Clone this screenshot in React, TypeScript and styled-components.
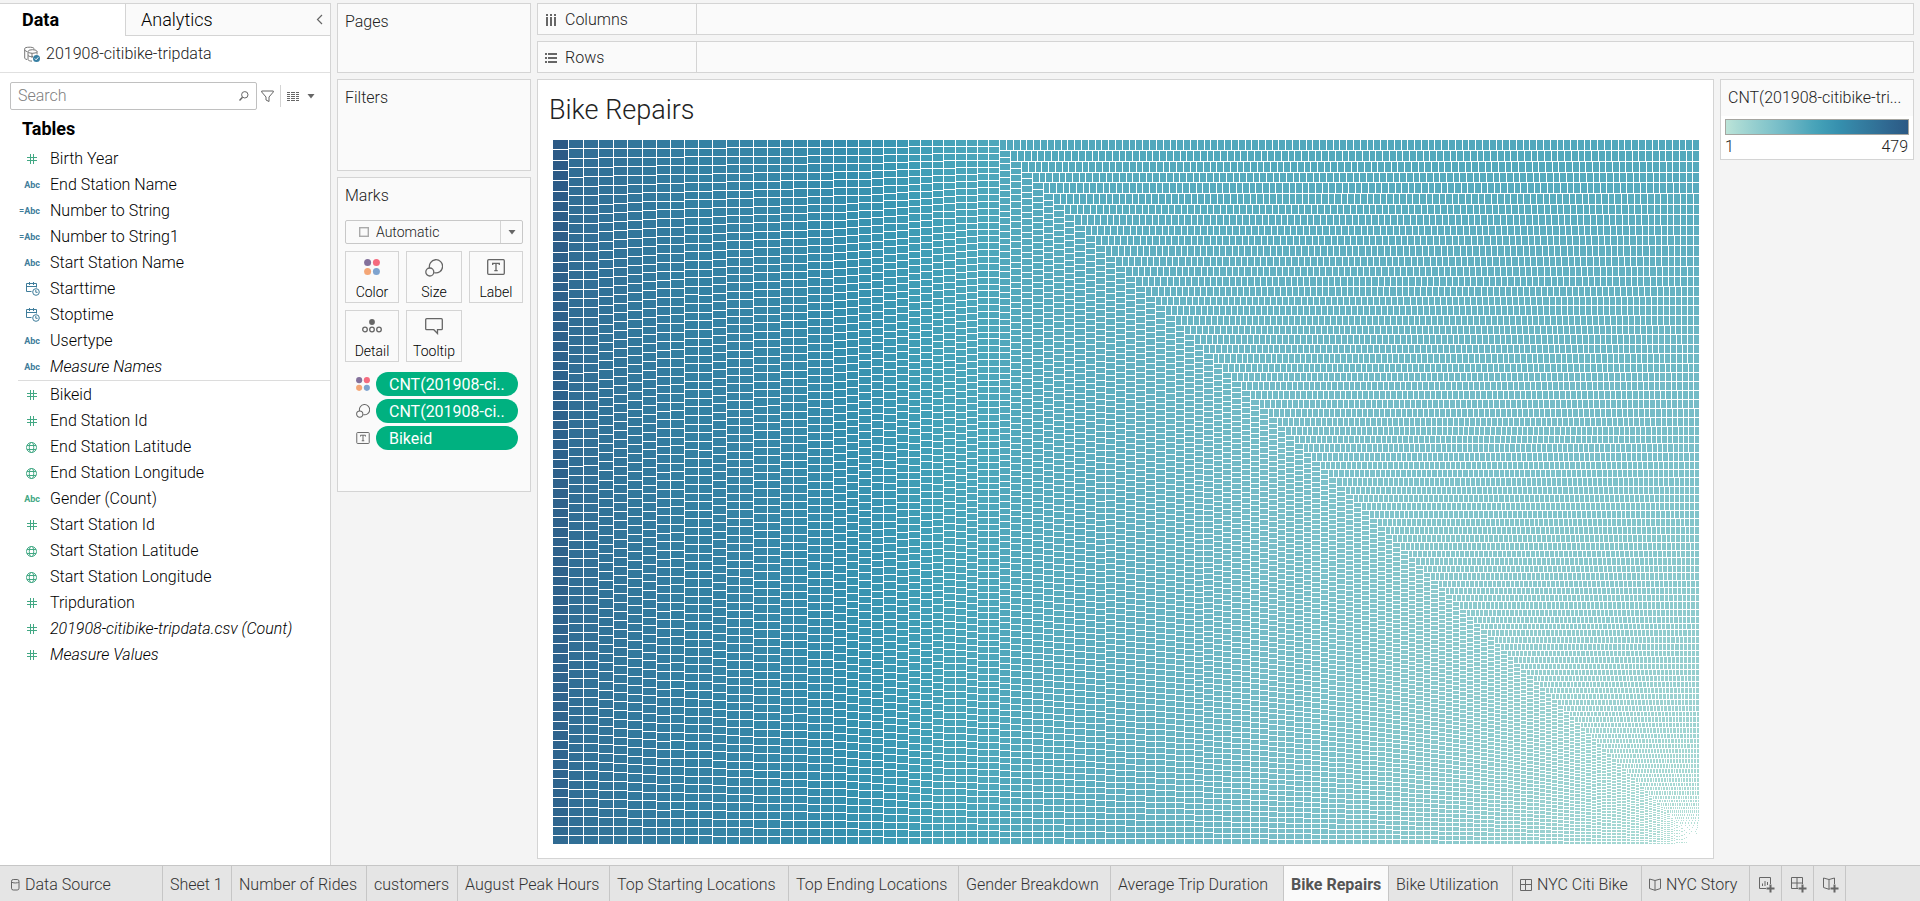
import React, { useLayoutEffect, useMemo, useRef, useState } from "react";
import styled, { createGlobalStyle } from "styled-components";

const color = {
  page: "#f4f4f4",
  card: "#fafafa",
  line: "#d4d4d4",
  text: "#222222",
  icon: "#666666",
  blue: "#3f7d9b",
  green: "#42a884",
  pill: "#00b180",
};

/* ---------- treemap model ---------- */

const PALETTE = [
  "#bce4d8", "#aedcd5", "#a1d5d2", "#95cecf", "#89c8cc", "#7ec1ca", "#72bac6", "#66b2c2", "#59acbe", "#4ba5ba",
  "#419eb6", "#3b96b2", "#358ead", "#3586a7", "#347ea1", "#32779b", "#316f96", "#2f6790", "#2d608a", "#2c5985",
];
const MAX_RIDES = 479;
const TOTAL_RIDES = 2344000;

/* Rides per bike, keyed by the square root of the share of rides still to come. */
const CURVE: [number, number][] = [
  [0, 1], [0.023, 10], [0.041, 22], [0.057, 31], [0.078, 38], [0.205, 75], [0.574, 165], [0.781, 217],
  [0.806, 229], [0.864, 300], [0.943, 350], [0.985, 402], [0.993, 412], [0.9935, 440], [0.9985, 455], [1, 479],
];

function ridesAt(s: number): number {
  for (let i = 1; i < CURVE.length; i++) {
    const [s1, v1] = CURVE[i];
    if (s <= s1) {
      const [s0, v0] = CURVE[i - 1];
      return v0 + ((v1 - v0) * (s - s0)) / (s1 - s0);
    }
  }
  return MAX_RIDES;
}

function buildRides(): number[] {
  const rides: number[] = [];
  let left = TOTAL_RIDES;
  while (left > 0) {
    const v = Math.min(left, Math.max(1, Math.round(ridesAt(Math.sqrt(left / TOTAL_RIDES)))));
    rides.push(v);
    left -= v;
  }
  return rides;
}

const RIDES = buildRides();

function mix(t: number): string {
  const p = Math.min(0.9999, Math.max(0, t)) * (PALETTE.length - 1);
  const i = Math.floor(p);
  const parse = (hex: string) => [1, 3, 5].map((k) => parseInt(hex.slice(k, k + 2), 16));
  const a = parse(PALETTE[i]);
  const b = parse(PALETTE[i + 1]);
  return `rgb(${a.map((c, k) => Math.round(c + (b[k] - c) * (p - i))).join(",")})`;
}

/* Squarified layout aiming at golden-ratio tiles; tiles of one shade share a path. */
function layout(width: number, height: number): [string, string][] {
  const target = (1 + Math.sqrt(5)) / 2;
  const bins = new Map<number, string[]>();
  let x0 = 0;
  let y0 = 0;
  let left = TOTAL_RIDES;
  let i = 0;
  const put = (v: number, ax: number, ay: number, bx: number, by: number) => {
    const x = Math.round(ax);
    const y = Math.round(ay);
    const w = Math.round(bx) - x - 1;
    const h = Math.round(by) - y - 1;
    if (w < 1 || h < 1) return;
    const key = Math.round((v / MAX_RIDES) * 120);
    const list = bins.get(key) ?? [];
    list.push(`M${x} ${y}h${w}v${h}h${-w}z`);
    bins.set(key, list);
  };
  while (i < RIDES.length && left > 0) {
    const dx = width - x0;
    const dy = height - y0;
    if (dx < 1 || dy < 1) break;
    let sum = RIDES[i];
    let min = sum;
    let max = sum;
    const alpha = Math.max(dy / dx, dx / dy) / (left * target);
    let worst = Math.max(max / (sum * sum * alpha), (sum * sum * alpha) / min);
    let j = i + 1;
    for (; j < RIDES.length; j++) {
      const v = RIDES[j];
      const next = sum + v;
      min = Math.min(min, v);
      max = Math.max(max, v);
      const beta = next * next * alpha;
      const ratio = Math.max(max / beta, beta / min);
      if (ratio > worst) break;
      sum = next;
      worst = ratio;
    }
    if (dx < dy) {
      const t = (dy * sum) / left;
      let x = x0;
      for (; i < j; i++) {
        const w = (dx * RIDES[i]) / sum;
        put(RIDES[i], x, y0, x + w, y0 + t);
        x += w;
      }
      y0 += t;
    } else {
      const t = (dx * sum) / left;
      let y = y0;
      for (; i < j; i++) {
        const h = (dy * RIDES[i]) / sum;
        put(RIDES[i], x0, y, x0 + t, y + h);
        y += h;
      }
      x0 += t;
    }
    left -= sum;
  }
  return [...bins].map(([key, d]) => [mix(key / 120), d.join("")]);
}

/* ---------- shared parts ---------- */

const GlobalStyle = createGlobalStyle`
  * { box-sizing: border-box; }
  body {
    margin: 0;
    background: ${color.page};
    color: ${color.text};
    font: 300 16px/20px Roboto, "Liberation Sans", sans-serif;
  }
  button, input, select { font: inherit; color: inherit; }
  button { cursor: pointer; }
  ul { list-style: none; margin: 0; padding: 0; }
  h1, h2 { margin: 0; font-weight: 300; }
  svg { display: block; flex: none; }
`;

const Page = styled.div`
  display: flex;
  flex-direction: column;
  min-height: 100vh;
`;

const Workspace = styled.div`
  display: flex;
  flex: 1;
  gap: 6px;
  padding: 3px 6px 6px 0;
`;

/* ---------- data pane ---------- */

const DataPane = styled.aside`
  flex: 0 0 331px;
  margin-bottom: -6px;
  background: #fff;
  border-top: 1px solid ${color.line};
  border-right: 1px solid ${color.line};
`;

const PaneTabs = styled.div`
  display: flex;
  height: 32px;
`;

const PaneTab = styled.button<{ $active?: boolean }>`
  flex: ${(p) => (p.$active ? "0 0 125px" : "1")};
  display: flex;
  align-items: center;
  justify-content: space-between;
  padding: 0 6px 0 ${(p) => (p.$active ? 22 : 15)}px;
  border: 0 solid ${color.line};
  border-width: ${(p) => (p.$active ? "0" : "0 0 1px 1px")};
  background: ${(p) => (p.$active ? "#fff" : color.card)};
  color: #000;
  font-size: 18px;
  font-weight: ${(p) => (p.$active ? 700 : 300)};
`;

const Source = styled.div`
  display: flex;
  align-items: center;
  gap: 6px;
  height: 37px;
  padding-left: 24px;
  border-bottom: 1px solid #e0e0e0;
`;

const SearchRow = styled.div`
  display: flex;
  align-items: center;
  margin: 9px 0 0 10px;
`;

const SearchBox = styled.label`
  display: flex;
  align-items: center;
  width: 247px;
  height: 28px;
  padding: 0 7px;
  border: 1px solid #c0c0c0;
  border-radius: 2px;
`;

const SearchInput = styled.input`
  flex: 1;
  min-width: 0;
  padding: 0;
  border: 0;
  outline: 0;
  background: none;
  &::placeholder { color: #808080; }
`;

const IconButton = styled.button<{ $gap: number }>`
  display: flex;
  align-items: center;
  padding: 0 0 0 ${(p) => p.$gap}px;
  border: 0;
  background: none;
`;

const Rule = styled.span`
  width: 1px;
  height: 22px;
  margin-left: 6px;
  background: ${color.line};
`;

const TablesTitle = styled.h2`
  padding: 9px 0 7px 22px;
  color: #000;
  font-size: 18px;
  font-weight: 700;
`;

const Fields = styled.ul`
  & + & {
    margin-left: 18px;
    padding-top: 1px;
    border-top: 1px solid #dcdcdc;
  }
  & + & li { padding-left: 2px; }
`;

const Field = styled.li<{ $italic?: boolean }>`
  display: flex;
  align-items: center;
  gap: 10px;
  height: 26px;
  padding-left: 20px;
  color: #000;
  font-style: ${(p) => (p.$italic ? "italic" : "normal")};
`;

const FieldIcon = styled.span<{ $measure?: boolean }>`
  display: flex;
  justify-content: flex-end;
  width: 20px;
  color: ${(p) => (p.$measure ? color.green : color.blue)};
  font: 700 9px/12px Roboto, sans-serif;
`;

/* ---------- cards ---------- */

const Cards = styled.div`
  display: flex;
  flex: 0 0 194px;
  flex-direction: column;
  gap: 6px;
`;

const Card = styled.section<{ $height: number }>`
  min-height: ${(p) => p.$height}px;
  padding: 8px 7px;
  border: 1px solid ${color.line};
  background: ${color.card};
`;

const CardTitle = styled.h2`
  font-size: 16px;
`;

const MarkType = styled.label`
  display: grid;
  grid-template-columns: 154px 1fr;
  align-items: center;
  height: 24px;
  margin-top: 14px;
  border: 1px solid #c8c8c8;
  border-radius: 2px;
  > * { grid-row: 1; }
  > svg:first-child { grid-column: 1; margin-left: 13px; }
`;

const MarkSelect = styled.select`
  grid-column: 1 / -1;
  height: 22px;
  padding: 0 0 0 30px;
  border: 0;
  outline: 0;
  background: none;
  appearance: none;
  font-size: 14px;
`;

const MarkArrow = styled.span`
  grid-column: 2;
  display: flex;
  align-items: center;
  justify-content: center;
  height: 22px;
  border-left: 1px solid ${color.line};
  pointer-events: none;
`;

const MarkButtons = styled.div`
  display: grid;
  grid-template-columns: 54px 56px 54px;
  gap: 7px;
  margin-top: 7px;
`;

const MarkButton = styled.button`
  display: flex;
  flex-direction: column;
  align-items: center;
  justify-content: space-between;
  height: 52px;
  padding: 7px 0 0;
  border: 1px solid ${color.line};
  background: ${color.card};
  color: #000;
  font-size: 14px;
`;

const Pills = styled.ul`
  display: flex;
  flex-direction: column;
  gap: 3px;
  margin-top: 10px;
  padding: 0 5px 0 10px;
`;

const PillRow = styled.li`
  display: flex;
  align-items: center;
  gap: 5px;
`;

const PillIcon = styled.span`
  display: flex;
  justify-content: center;
  width: 16px;
`;

const Pill = styled.button`
  flex: 1;
  height: 24px;
  padding: 1px 13px 0;
  border: 0;
  border-radius: 12px;
  background: ${color.pill};
  color: #fff;
  font-weight: 400;
  text-align: left;
  white-space: nowrap;
`;

/* ---------- shelves and view ---------- */

const Main = styled.main`
  display: flex;
  flex: 1;
  flex-direction: column;
  gap: 6px;
  min-width: 0;
`;

const Shelf = styled.div`
  display: flex;
  height: 32px;
  border: 1px solid ${color.line};
  background: ${color.card};
`;

const ShelfLabel = styled.div`
  display: flex;
  align-items: center;
  gap: 8px;
  width: 159px;
  padding: 1px 0 0 7px;
  border-right: 1px solid ${color.line};
`;

const ViewRow = styled.div`
  display: flex;
  flex: 1;
  align-items: flex-start;
  gap: 6px;
`;

const View = styled.section`
  display: flex;
  flex: 1;
  flex-direction: column;
  align-self: stretch;
  min-width: 0;
  padding: 0 13px 13px 15px;
  border: 1px solid ${color.line};
  background: #fff;
`;

const ViewTitle = styled.h1`
  height: 60px;
  margin-left: -4px;
  font-size: 27px;
  line-height: 60px;
`;

const ChartArea = styled.div`
  flex: 1;
  min-height: 300px;
  overflow: hidden;
`;

const Legend = styled.section`
  flex: 0 0 194px;
  border: 1px solid ${color.line};
  background: #fff;
`;

const LegendTitle = styled.h2`
  padding: 8px 7px;
  background: ${color.card};
  font-size: 16px;
  white-space: nowrap;
`;

const Ramp = styled.div`
  height: 16px;
  margin: 3px 4px 2px;
  border: 1px solid #a5a5a0;
  background: linear-gradient(to right, ${PALETTE.join(",")});
`;

const RampLabels = styled.div`
  display: flex;
  justify-content: space-between;
  padding: 0 5px 2px 4px;
`;

/* ---------- sheet tabs ---------- */

const SheetBar = styled.nav`
  display: flex;
  height: 36px;
  border-top: 1px solid #c6c6c6;
  background: #e5e5e5;
`;

const SheetTab = styled.button<{ $width: number; $active?: boolean; $inset?: number }>`
  display: flex;
  flex: 0 0 ${(p) => p.$width}px;
  align-items: center;
  gap: 5px;
  padding: 2px 0 0 ${(p) => p.$inset ?? 7}px;
  border: 0;
  border-right: 1px solid #c6c6c6;
  background: ${(p) => (p.$active ? color.card : "none")};
  color: ${(p) => (p.$active ? "#555" : "#333")};
  font-size: 16px;
  font-weight: ${(p) => (p.$active ? 700 : 300)};
  white-space: nowrap;
`;

/* ---------- icons ---------- */

const Hash = () => (
  <svg width="10" height="10" viewBox="0 0 10 10" stroke="currentColor" shapeRendering="crispEdges">
    <path d="M3.5 0v10M6.5 0v10M0 3.5h10M0 6.5h10" />
  </svg>
);
const Globe = () => (
  <svg width="11" height="11" viewBox="0 0 11 11" fill="none" stroke="currentColor">
    <circle cx="5.5" cy="5.5" r="5" />
    <ellipse cx="5.5" cy="5.5" rx="2.2" ry="5" />
    <path d="M1 3.5h9M1 7.5h9" />
  </svg>
);
const DateTime = () => (
  <svg width="14" height="14" viewBox="0 0 14 14" fill="none" stroke="currentColor">
    <path d="M5.5 9.5h-5v-8h10v4M.5 4.5h10M3.5 0v3M7.5 0v3" />
    <circle cx="10" cy="10" r="3.3" />
    <path d="M9.8 8v2.3h1.8" />
  </svg>
);
const Chevron = () => (
  <svg width="8" height="12" viewBox="0 0 8 12" fill="none" stroke={color.icon}>
    <path d="M6 1L1.500 5.500 6 10" strokeWidth="1.2" />
  </svg>
);
const SourceIcon = () => (
  <svg width="16" height="16" viewBox="0 0 16 16" fill="none" stroke="#777">
    <path d="M3 13.500C1 13 .7 12.500 .7 12V2.500C.7 1 9 .5 10 2.500V3.500M.7 4C1 5 2 5.300 3 5.500" />
    <ellipse cx="8.500" cy="5.500" rx="4.500" ry="1.800" />
    <path d="M4 5.500v8c0 1 2 1.600 4 1.600M13 5.500v3M4 9.500c1 1 3 1.300 5 1M8 7v5" />
    <circle cx="12.500" cy="12.500" r="3.500" fill="#377fa3" stroke="none" />
    <path d="M10.800 12.500l1.300 1.300 2.200-2.500" stroke="#fff" />
  </svg>
);
const SearchIcon = () => (
  <svg width="10" height="10" viewBox="0 0 10 10" fill="none" stroke={color.icon}>
    <circle cx="5.800" cy="3.800" r="3.200" />
    <path d="M3.500 6.200L.5 9.500" strokeWidth="1.400" />
  </svg>
);
const Funnel = () => (
  <svg width="13" height="13" viewBox="0 0 13 13" fill="none" stroke={color.icon}>
    <path d="M.7 1h11.600v1L8 7v4.500L5 10V7L.7 2z" />
  </svg>
);
const ListIcon = () => (
  <svg width="12" height="9" viewBox="0 0 12 9" stroke={color.icon} shapeRendering="crispEdges">
    <path d="M0 .5h12M0 2.500h12M0 4.500h12M0 6.500h12M0 8.500h12" strokeDasharray="3 1 4 1" />
  </svg>
);
const Caret = () => (
  <svg width="8" height="5" viewBox="0 0 8 5" fill={color.icon}>
    <path d="M.5 0h7L4 4.500z" />
  </svg>
);
const Square = () => (
  <svg width="10" height="10" viewBox="0 0 10 10" fill="none" stroke="#aaa">
    <rect x=".7" y=".7" width="8.600" height="8.600" strokeWidth="1.400" />
  </svg>
);
const Dots = ({ size = 16 }: { size?: number }) => (
  <svg width={size} height={size} viewBox="0 0 16 16">
    <circle cx="3.600" cy="3.600" r="3.500" fill="#83709b" />
    <circle cx="12.400" cy="3.600" r="3.500" fill="#f56b7f" />
    <circle cx="3.600" cy="12.400" r="3.500" fill="#f4a676" />
    <circle cx="12.400" cy="12.400" r="3.500" fill="#7ea3cf" />
  </svg>
);
const SizeIcon = ({ size = 18 }: { size?: number }) => (
  <svg width={size} height={size} viewBox="0 0 18 18" fill="none" stroke={color.icon} strokeWidth="1.300">
    <path d="M4.600 9A6.600 6.600 0 1 1 9.300 13.700" />
    <circle cx="4.800" cy="13" r="4" />
  </svg>
);
const LabelIcon = ({ size = 18 }: { size?: number }) => (
  <svg width={size} height={size - 2} viewBox="0 0 18 16" fill="none" stroke={color.icon} strokeWidth="1.300">
    <rect x=".7" y=".7" width="16.600" height="14.600" rx="1" />
    <path d="M5.700 6V4.300h6.600V6M9 4.300v7.400M7.300 11.700h3.400" />
  </svg>
);
const DetailIcon = () => (
  <svg width="20" height="16" viewBox="0 0 20 16" fill="none" stroke={color.icon} strokeWidth="1.300">
    <circle cx="10" cy="4" r="2.900" fill={color.icon} stroke="none" />
    <circle cx="3" cy="11.500" r="2.300" />
    <circle cx="10" cy="11.500" r="2.300" />
    <circle cx="17" cy="11.500" r="2.300" />
  </svg>
);
const TooltipIcon = () => (
  <svg width="18" height="17" viewBox="0 0 18 17" fill="none" stroke={color.icon} strokeWidth="1.300">
    <path d="M1.700 .7h14.600a1 1 0 0 1 1 1v9a1 1 0 0 1-1 1H12.500V15.500L8.800 11.700H1.700a1 1 0 0 1-1-1v-9a1 1 0 0 1 1-1z" />
  </svg>
);
const ColumnsIcon = () => (
  <svg width="12" height="12" viewBox="0 0 12 12" fill={color.icon} shapeRendering="crispEdges">
    <path d="M1 0h2v2H1zM5 0h2v2H5zM9 0h2v2H9zM1 3h2v9H1zM5 3h2v9H5zM9 3h2v9H9z" />
  </svg>
);
const RowsIcon = () => (
  <svg width="12" height="10" viewBox="0 0 12 10" fill={color.icon} shapeRendering="crispEdges">
    <path d="M0 0h2v2H0zM0 4h2v2H0zM0 8h2v2H0zM3 0h9v2H3zM3 4h9v2H3zM3 8h9v2H3z" />
  </svg>
);
const Cylinder = () => (
  <svg width="9" height="12" viewBox="0 0 9 12" fill="none" stroke={color.icon}>
    <rect x=".5" y=".5" width="7.500" height="10.500" rx="1.800" />
    <path d="M.5 3c1 1.300 6.500 1.300 7.500 0" />
  </svg>
);
const DashboardIcon = () => (
  <svg width="12" height="12" viewBox="0 0 12 12" fill="none" stroke={color.icon}>
    <path d="M.5 .5h11v11H.5zM5.500 .5v11M.5 5.500h11" />
  </svg>
);
const StoryIcon = () => (
  <svg width="12" height="13" viewBox="0 0 12 13" fill="none" stroke={color.icon}>
    <path d="M.5 1L6 2.500 11.500 1v9.500L6 12.300 .5 10.500zM6 2.500v9.800" />
  </svg>
);
const NewIcon = ({ kind }: { kind: "sheet" | "dashboard" | "story" }) => (
  <svg width="16" height="16" viewBox="0 0 16 16" fill="none" stroke={color.icon}>
    {kind === "sheet" && <path d="M7 11.500H.5v-11h11V7M3.500 9V6.500M6 9V4M8.500 8V5" />}
    {kind === "dashboard" && <path d="M7 11.500H.5v-11h11V7M6 .5v11M.5 6h11" />}
    {kind === "story" && <path d="M7 11.800L6 12.300 .5 10.500V1L6 2.500 11.500 1V7M6 2.500v9.500" />}
    <path d="M11.500 7.500v8M7.500 11.500h8" strokeWidth="2" />
  </svg>
);

/* ---------- content ---------- */

type Kind = "number" | "text" | "calc" | "date" | "geo";
type FieldDef = { name: string; kind: Kind; measure?: boolean; italic?: boolean };

const DIMENSIONS: FieldDef[] = [
  { name: "Birth Year", kind: "number", measure: true },
  { name: "End Station Name", kind: "text" },
  { name: "Number to String", kind: "calc" },
  { name: "Number to String1", kind: "calc" },
  { name: "Start Station Name", kind: "text" },
  { name: "Starttime", kind: "date" },
  { name: "Stoptime", kind: "date" },
  { name: "Usertype", kind: "text" },
  { name: "Measure Names", kind: "text", italic: true },
];

const MEASURES: FieldDef[] = [
  { name: "Bikeid", kind: "number" },
  { name: "End Station Id", kind: "number" },
  { name: "End Station Latitude", kind: "geo" },
  { name: "End Station Longitude", kind: "geo" },
  { name: "Gender (Count)", kind: "text" },
  { name: "Start Station Id", kind: "number" },
  { name: "Start Station Latitude", kind: "geo" },
  { name: "Start Station Longitude", kind: "geo" },
  { name: "Tripduration", kind: "number" },
  { name: "201908-citibike-tripdata.csv (Count)", kind: "number", italic: true },
  { name: "Measure Values", kind: "number", italic: true },
].map((f) => ({ ...f, measure: true }) as FieldDef);

const GlyphSlot = styled.span`
  display: flex;
  justify-content: center;
  width: 17px;
`;

const kindIcon = (kind: Kind) => {
  if (kind === "text") return "Abc";
  if (kind === "calc") return "=Abc";
  if (kind === "date") return <DateTime />;
  return <GlyphSlot>{kind === "geo" ? <Globe /> : <Hash />}</GlyphSlot>;
};

const FieldList = ({ items }: { items: FieldDef[] }) => (
  <Fields>
    {items.map((f) => (
      <Field key={f.name} $italic={f.italic}>
        <FieldIcon $measure={f.measure}>{kindIcon(f.kind)}</FieldIcon>
        {f.name}
      </Field>
    ))}
  </Fields>
);

const MARKS = [
  { name: "Color", icon: <Dots /> },
  { name: "Size", icon: <SizeIcon /> },
  { name: "Label", icon: <LabelIcon /> },
  { name: "Detail", icon: <DetailIcon /> },
  { name: "Tooltip", icon: <TooltipIcon /> },
];

const SHEETS: { name: string; width: number; icon?: React.ReactNode; inset?: number }[] = [
  { name: "Data Source", width: 163, icon: <Cylinder />, inset: 11 },
  { name: "Sheet 1", width: 69 },
  { name: "Number of Rides", width: 135 },
  { name: "customers", width: 91 },
  { name: "August Peak Hours", width: 152 },
  { name: "Top Starting Locations", width: 179 },
  { name: "Top Ending Locations", width: 170 },
  { name: "Gender Breakdown", width: 152 },
  { name: "Average Trip Duration", width: 173 },
  { name: "Bike Repairs", width: 105 },
  { name: "Bike Utilization", width: 124 },
  { name: "NYC Citi Bike", width: 129, icon: <DashboardIcon /> },
  { name: "NYC Story", width: 108, icon: <StoryIcon /> },
];

function Treemap() {
  const area = useRef<HTMLDivElement>(null);
  const [size, setSize] = useState({ w: 0, h: 0 });
  useLayoutEffect(() => {
    const el = area.current;
    if (!el) return;
    const measure = () => setSize({ w: el.clientWidth, h: el.clientHeight });
    measure();
    const observer = new ResizeObserver(measure);
    observer.observe(el);
    return () => observer.disconnect();
  }, []);
  const shades = useMemo(() => layout(size.w, size.h), [size.w, size.h]);
  return (
    <ChartArea ref={area}>
      <svg width="100%" height="100%" style={{ height: size.h }} shapeRendering="crispEdges" role="img" aria-label="Treemap of rides per bike">
        {shades.map(([fill, d]) => (
          <path key={fill} fill={fill} d={d} />
        ))}
      </svg>
    </ChartArea>
  );
}

export default function App() {
  return (
    <Page>
      <GlobalStyle />
      <Workspace>
        <DataPane>
          <PaneTabs>
            <PaneTab $active>Data</PaneTab>
            <PaneTab>
              Analytics
              <Chevron />
            </PaneTab>
          </PaneTabs>
          <Source>
            <SourceIcon />
            201908-citibike-tripdata
          </Source>
          <SearchRow>
            <SearchBox>
              <SearchInput type="text" placeholder="Search" aria-label="Search" />
              <SearchIcon />
            </SearchBox>
            <IconButton $gap={4} aria-label="Filter fields"><Funnel /></IconButton>
            <Rule />
            <IconButton $gap={6} aria-label="View as list"><ListIcon /></IconButton>
            <IconButton $gap={8} aria-label="More options"><Caret /></IconButton>
          </SearchRow>
          <TablesTitle>Tables</TablesTitle>
          <FieldList items={DIMENSIONS} />
          <FieldList items={MEASURES} />
        </DataPane>

        <Cards>
          <Card $height={70}><CardTitle>Pages</CardTitle></Card>
          <Card $height={92}><CardTitle>Filters</CardTitle></Card>
          <Card $height={315}>
            <CardTitle>Marks</CardTitle>
            <MarkType>
              <Square />
              <MarkSelect aria-label="Mark type">
                <option>Automatic</option>
              </MarkSelect>
              <MarkArrow><Caret /></MarkArrow>
            </MarkType>
            <MarkButtons>
              {MARKS.map((m) => (
                <MarkButton key={m.name}>
                  {m.icon}
                  {m.name}
                </MarkButton>
              ))}
            </MarkButtons>
            <Pills>
              <PillRow>
                <PillIcon><Dots size={14} /></PillIcon>
                <Pill>CNT(201908-ci..</Pill>
              </PillRow>
              <PillRow>
                <PillIcon><SizeIcon size={14} /></PillIcon>
                <Pill>CNT(201908-ci..</Pill>
              </PillRow>
              <PillRow>
                <PillIcon><LabelIcon size={14} /></PillIcon>
                <Pill>Bikeid</Pill>
              </PillRow>
            </Pills>
          </Card>
        </Cards>

        <Main>
          <Shelf><ShelfLabel><ColumnsIcon />Columns</ShelfLabel></Shelf>
          <Shelf><ShelfLabel><RowsIcon />Rows</ShelfLabel></Shelf>
          <ViewRow>
            <View>
              <ViewTitle>Bike Repairs</ViewTitle>
              <Treemap />
            </View>
            <Legend>
              <LegendTitle>CNT(201908-citibike-tri...</LegendTitle>
              <Ramp />
              <RampLabels><span>1</span><span>479</span></RampLabels>
            </Legend>
          </ViewRow>
        </Main>
      </Workspace>

      <SheetBar aria-label="Sheets">
        {SHEETS.map((s) => (
          <SheetTab key={s.name} $width={s.width} $inset={s.inset} $active={s.name === "Bike Repairs"}>
            {s.icon}
            {s.name}
          </SheetTab>
        ))}
        <SheetTab $width={32} $inset={9} aria-label="New worksheet"><NewIcon kind="sheet" /></SheetTab>
        <SheetTab $width={32} $inset={9} aria-label="New dashboard"><NewIcon kind="dashboard" /></SheetTab>
        <SheetTab $width={32} $inset={9} aria-label="New story"><NewIcon kind="story" /></SheetTab>
      </SheetBar>
    </Page>
  );
}
